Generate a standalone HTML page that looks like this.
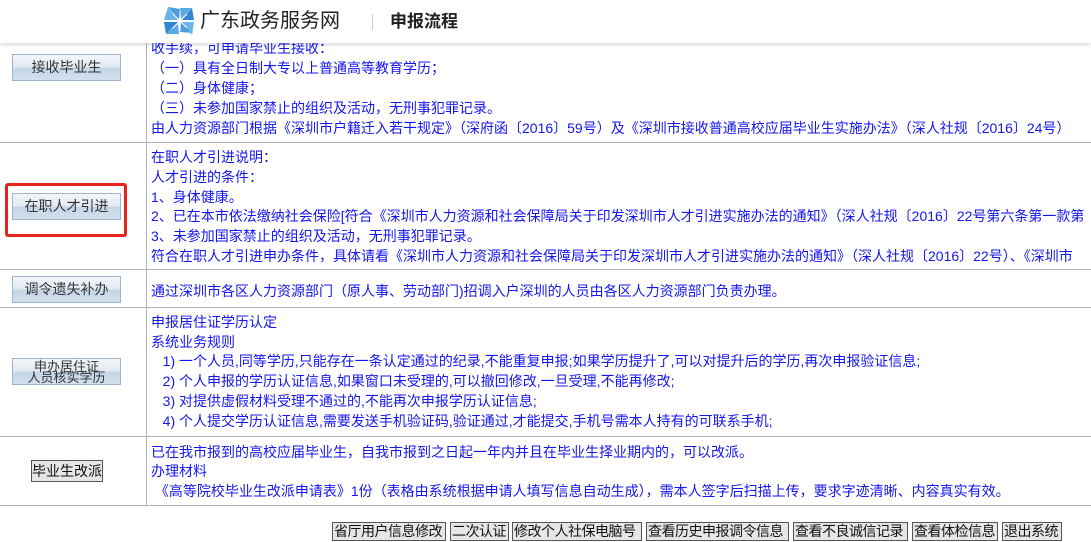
<!DOCTYPE html>
<html><head><meta charset="utf-8">
<style>
*{margin:0;padding:0;box-sizing:border-box}
body{width:1091px;height:542px;overflow:hidden;background:#fff;position:relative;font-family:"Liberation Sans","Noto Sans CJK SC",sans-serif;font-size:14px}
.hdr{position:absolute;left:0;top:0;width:1091px;height:43px;background:#fff;box-shadow:0 2px 4px rgba(0,0,0,.15);z-index:5}
.t{position:absolute;white-space:nowrap;color:#1515f0;font-size:14px;line-height:18px}
.hl{position:absolute;left:0;width:1091px;height:1px;background:#a9b3c3}
.vl{position:absolute;left:146px;width:1px;background:#a9b3c3}
.btn{position:absolute;left:12px;width:109px;height:27px;border:1px solid #9fb3cc;background:linear-gradient(#f3f6fa 0%,#e2e9f2 50%,#c3d4e6 52%,#d3e0ee 100%);color:#333;font-size:14px;text-align:center;line-height:25px;font-family:"Liberation Sans","Noto Sans CJK SC",sans-serif}
.gb{position:absolute;top:522px;height:19px;border:1px solid #555;background:#e6e6e6;color:#111;font-size:14px;line-height:17px;padding:0 1px;white-space:nowrap;letter-spacing:-0.5px}
</style></head><body>
<div class="hdr">
<svg style="position:absolute;left:162px;top:5px" width="36" height="32" viewBox="0 0 36 32">
<path d="M6 2 L18 4 L17 15 Z" fill="#4a9ee0"/><path d="M30 3 L32 15 L19 15 Z" fill="#2f86d6"/>
<path d="M31 28 L18 27 L19 17 Z" fill="#4a9ee0"/><path d="M4 29 L2 17 L16 17 Z" fill="#2f86d6"/>
<path d="M2 15 L6 2 L16 15Z" fill="#6bb4ea"/><path d="M32 17 L30 30 L20 17Z" fill="#6bb4ea"/>
<path d="M18 3 L30 3 L19 14Z" fill="#5aa9e6"/><path d="M17 29 L4 29 L16 18Z" fill="#5aa9e6"/>
<g stroke="#fff" stroke-width="1"><line x1="18" y1="6" x2="18" y2="26"/><line x1="8" y1="16" x2="28" y2="16"/><line x1="11" y1="9" x2="25" y2="23"/><line x1="25" y1="9" x2="11" y2="23"/></g>
</svg>
<div style="position:absolute;left:200px;top:7px;font-size:20px;color:#222;line-height:28px;white-space:nowrap">广东政务服务网</div>
<div style="position:absolute;left:372px;top:14px;width:1px;height:16px;background:#ccc"></div>
<div style="position:absolute;left:390px;top:9px;font-size:17px;font-weight:bold;color:#222;line-height:26px;white-space:nowrap">申报流程</div>
</div>

<div class="vl" style="top:43px;height:462px"></div>
<div class="hl" style="top:142px"></div>
<div class="hl" style="top:269px"></div>
<div class="hl" style="top:307px"></div>
<div class="hl" style="top:436px"></div>
<div class="hl" style="top:505px"></div>

<div class="btn" style="top:54px">接收毕业生</div>
<div class="t" style="left:151px;top:39px">收手续，可申请毕业生接收：</div>
<div class="t" style="left:151px;top:59px">（一）具有全日制大专以上普通高等教育学历；</div>
<div class="t" style="left:151px;top:79px">（二）身体健康；</div>
<div class="t" style="left:151px;top:99px">（三）未参加国家禁止的组织及活动，无刑事犯罪记录。</div>
<div class="t" style="left:151px;top:119px">由人力资源部门根据《深圳市户籍迁入若干规定》（深府函〔2016〕59号）及《深圳市接收普通高校应届毕业生实施办法》（深人社规〔2016〕24号）</div>

<div style="position:absolute;left:5px;top:183px;width:122px;height:54px;border:3px solid #e8221c;border-radius:3px"></div>
<div class="btn" style="top:193px">在职人才引进</div>
<div class="t" style="left:151px;top:148px">在职人才引进说明：</div>
<div class="t" style="left:151px;top:168px">人才引进的条件：</div>
<div class="t" style="left:151px;top:188px">1、身体健康。</div>
<div class="t" style="left:151px;top:207px">2、已在本市依法缴纳社会保险[符合《深圳市人力资源和社会保障局关于印发深圳市人才引进实施办法的通知》（深人社规〔2016〕22号第六条第一款第</div>
<div class="t" style="left:151px;top:227px">3、未参加国家禁止的组织及活动，无刑事犯罪记录。</div>
<div class="t" style="left:151px;top:247px">符合在职人才引进申办条件，具体请看《深圳市人力资源和社会保障局关于印发深圳市人才引进实施办法的通知》（深人社规〔2016〕22号）、《深圳市</div>

<div class="btn" style="top:276px">调令遗失补办</div>
<div class="t" style="left:151px;top:282px">通过深圳市各区人力资源部门（原人事、劳动部门)招调入户深圳的人员由各区人力资源部门负责办理。</div>

<div class="btn" style="top:358px;font-size:13px;line-height:11px;padding-top:2px">申办居住证<br>人员核实学历</div>
<div class="t" style="left:151px;top:313px">申报居住证学历认定</div>
<div class="t" style="left:151px;top:333px">系统业务规则</div>
<div class="t" style="left:151px;top:352px">&nbsp;&nbsp; 1) 一个人员,同等学历,只能存在一条认定通过的纪录,不能重复申报;如果学历提升了,可以对提升后的学历,再次申报验证信息;</div>
<div class="t" style="left:151px;top:372px">&nbsp;&nbsp; 2) 个人申报的学历认证信息,如果窗口未受理的,可以撤回修改,一旦受理,不能再修改;</div>
<div class="t" style="left:151px;top:392px">&nbsp;&nbsp; 3) 对提供虚假材料受理不通过的,不能再次申报学历认证信息;</div>
<div class="t" style="left:151px;top:412px">&nbsp;&nbsp; 4) 个人提交学历认证信息,需要发送手机验证码,验证通过,才能提交,手机号需本人持有的可联系手机;</div>

<div style="position:absolute;left:31px;top:460px;width:72px;height:22px;border:1px solid #555;background:#e6e6e6;color:#111;font-size:14px;line-height:20px;text-align:center;white-space:nowrap">毕业生改派</div>
<div class="t" style="left:151px;top:443px">已在我市报到的高校应届毕业生，自我市报到之日起一年内并且在毕业生择业期内的，可以改派。</div>
<div class="t" style="left:151px;top:462px">办理材料</div>
<div class="t" style="left:151px;top:482px">&nbsp;《高等院校毕业生改派申请表》1份（表格由系统根据申请人填写信息自动生成），需本人签字后扫描上传，要求字迹清晰、内容真实有效。</div>

<div class="gb" style="left:332px;width:114px">省厅用户信息修改</div>
<div class="gb" style="left:450px;width:59px">二次认证</div>
<div class="gb" style="left:512px;width:130px">修改个人社保电脑号</div>
<div class="gb" style="left:646px;width:143px">查看历史申报调令信息</div>
<div class="gb" style="left:793px;width:115px">查看不良诚信记录</div>
<div class="gb" style="left:912px;width:86px">查看体检信息</div>
<div class="gb" style="left:1002px;width:60px">退出系统</div>
</body></html>
